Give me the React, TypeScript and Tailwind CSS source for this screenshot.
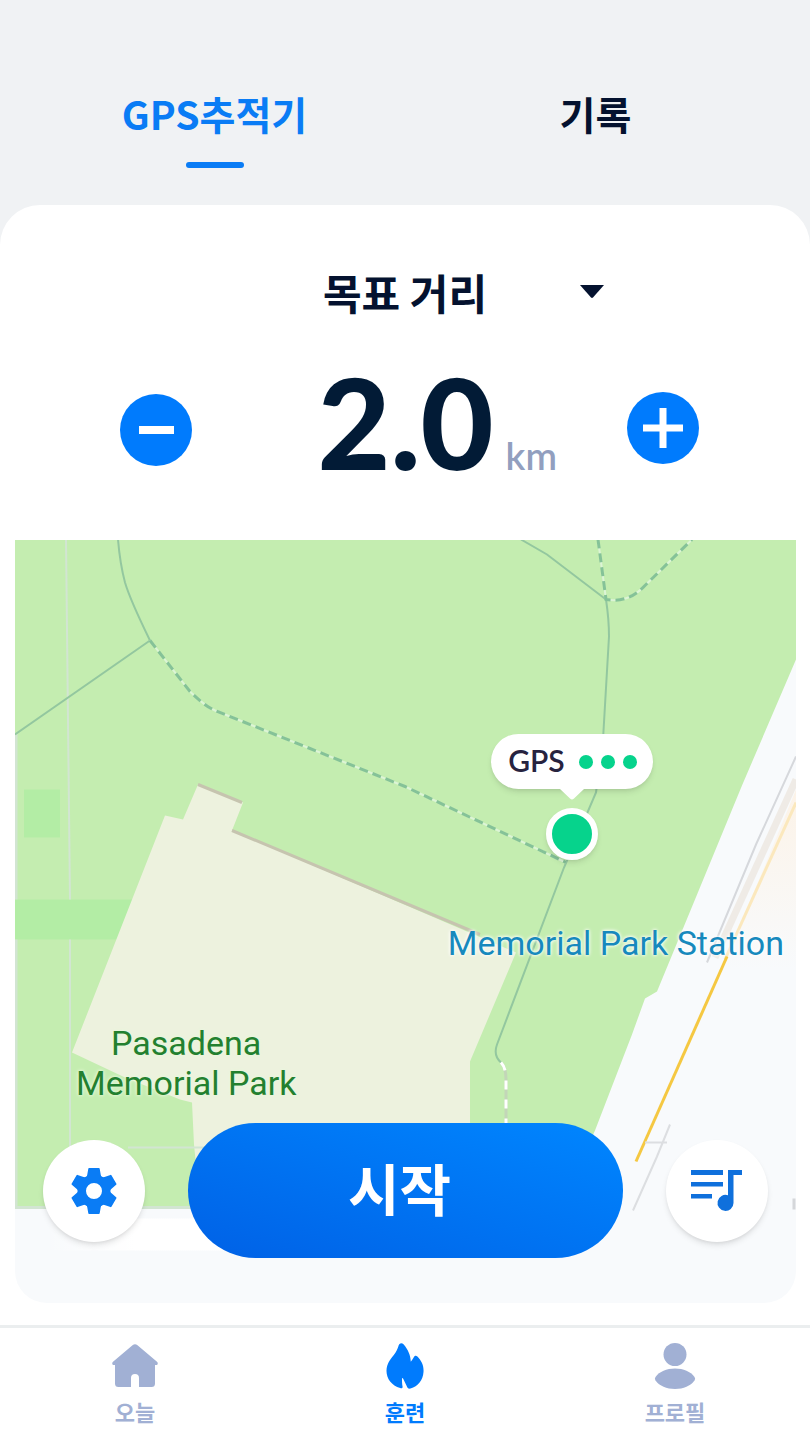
import { useState } from 'react';

const KR = "font-['Noto_Sans_CJK_KR',sans-serif]";
const LATO = "font-['Lato',sans-serif]";

function HomeIcon() {
  return (
    <svg viewBox="0 0 46 44" className="h-11 w-[46px] fill-current" aria-hidden="true">
      <path d="M20.5 1.2a4 4 0 0 1 5 0L45 17.800c1.400 1.300 .8 3.200-1 3.200H43v18.500a3.500 3.500 0 0 1-3.500 3.500H27V34a4 4 0 0 0-8 0v9H6.500A3.500 3.500 0 0 1 3 39.500V21H2c-1.800 0-2.400-1.900-1-3.200z" />
    </svg>
  );
}

function FlameIcon() {
  return (
    <svg viewBox="0 0 38 46" className="h-[46px] w-[38px] fill-current" aria-hidden="true">
      <path d="M13.500 1c1.200-1.200 2.800-1 4 .3 4.800 5.600 7 11 7.300 17.500 1.300-1.500 2-3 3-4.600.8-1.800 2.300-2 3.600-.6C35.500 18 38 22.500 37.500 29c-.5 8-5.500 14.500-13 16.500-2 .5-3-.2-3.700-2.200L17.300 36c-.6-1.400-1.300-1.200-1.300.3 0 2.400.1 4.400.5 7 .4 1.700-.6 2.400-2.300 1.800C5.500 42.300.3 35.500.5 27.500.7 21 4 16.500 7.800 12c2.700-3.300 4-6.500 5-10z" />
    </svg>
  );
}

function ProfileIcon() {
  return (
    <svg viewBox="0 0 42 46" className="h-[46px] w-[42px] fill-current" aria-hidden="true">
      <circle cx="21" cy="11.500" r="11.500" />
      <path d="M21 25.500c8.500 0 15.500 3 19.500 8.500a3 3 0 0 1 0 3.500C36.500 43 29.500 46 21 46S5.500 43 1.500 37.500a3 3 0 0 1 0-3.500C5.500 28.500 12.500 25.500 21 25.500z" />
    </svg>
  );
}

const TEETH = [0, 60, 120, 180, 240, 300];

function GearIcon() {
  return (
    <svg viewBox="-24 -24 48 48" className="size-12 fill-current" aria-hidden="true">
      <circle r="12.250" fill="none" stroke="currentColor" strokeWidth="8.500" />
      {TEETH.map((angle) => (
        <path key={angle} d="M-5 -23H5Q5.500 -23 5.700 -22.300L6.800 -16 8.500 -11H-8.500L-6.800 -16 -5.700 -22.300Q-5.500 -23 -5 -23z" transform={`rotate(${angle})`} />
      ))}
    </svg>
  );
}

function PlaylistIcon() {
  return (
    <svg viewBox="0 0 52 42" className="h-[42px] w-[52px] fill-current" aria-hidden="true">
      <path d="M0 0h32v5H0zM0 12h32v4.500H0zM0 24h21v4.500H0z" />
      <path d="M37 0h14v5h-8.500v28A8 8 0 1 1 37 25.300z" />
    </svg>
  );
}

function MapCanvas() {
  return (
    <svg
      viewBox="15 540 781 764"
      preserveAspectRatio="xMidYMid slice"
      className="absolute inset-0 h-full w-full"
      aria-hidden="true"
    >
      <defs>
        <linearGradient id="blocks" x1="0" y1="0" x2="0" y2="1">
          <stop offset="0" stopColor="#fcf3e8" />
          <stop offset="1" stopColor="#f8fafc" />
        </linearGradient>
        <linearGradient id="strip" x1="0" y1="0" x2="1" y2="0">
          <stop offset="0" stopColor="#fff" stopOpacity="0" />
          <stop offset="0.500" stopColor="#fff" />
        </linearGradient>
      </defs>
      <rect x="15" y="540" width="781" height="764" fill="#f8fafc" />
      <rect x="45" y="1219" width="180" height="32" fill="url(#strip)" />

      {/* park */}
      <path d="M15 540H796V660L742 786 695 900 657 992 645 999 632 1035 595 1131 560 1207H15z" fill="#c4edb0" />
      <path d="M15 900H135V940H15zM24 790H60V838H24z" fill="#b3eda5" />
      <path d="M198 785 243 803 232 831 516 953 470 1062V1207H200L194 1145 192 1103 180 1100 125 1078 72 1053 165 816 183 820z" fill="#edf2de" />
      <path d="M198 785 242 803M232 831 480 935" fill="none" stroke="#c6c4af" strokeWidth="3" />

      {/* minor roads */}
      <g fill="none" stroke="#d2e5d2" strokeWidth="3">
        <path d="M66 540 70 900M70 940V1148M128 1148H205" strokeWidth="2" />
        <path d="M16 734V900M16 940V1207" />
        <path d="M15 1208H205" />
      </g>

      {/* trails */}
      <g fill="none" stroke="#93c79f" strokeWidth="2">
        <path d="M118 540Q120 564 125 583 130 600 150 641L15 735" />
        <path d="M521 540 547 555 606 600Q609 620 609 637L603 740 596 793 564 868 497 1045Q493 1056 501 1063" />
      </g>
      <g fill="none" stroke="#dcf4d6" strokeWidth="2">
        <path d="M150 641 190 692Q204 706 215 711L405 787 566 863" />
        <path d="M598 540 606 600Q628 604 645 586L692 540" />
      </g>
      <g fill="none" stroke="#85c298" strokeWidth="3" strokeDasharray="9 5">
        <path d="M150 641 190 692Q204 706 215 711L405 787 566 863" />
        <path d="M598 540 606 600Q628 604 645 586L692 540" />
      </g>
      <path d="M501 1063Q506 1068 506 1080V1125" fill="none" stroke="#c3d6b8" strokeWidth="3" />
      <path d="M501 1063Q506 1068 506 1080V1125" fill="none" stroke="#fff" strokeWidth="3" strokeDasharray="9 10" />

      {/* streets east of the park */}
      <path d="M796 790V970H722z" fill="url(#blocks)" />
      <path d="M796 780 715 958" fill="none" stroke="#efebe6" strokeWidth="7" />
      <path d="M796 803 725 960" fill="none" stroke="#fbe8bd" strokeWidth="3" />
      <path d="M796 757 756 845 707 963" fill="none" stroke="#d6d8dc" strokeWidth="2" />
      <path d="M727 957 636 1162" fill="none" stroke="#f5c842" strokeWidth="3" />
      <path d="M670 1125 657 1157 633 1211M645 1143H667" fill="none" stroke="#dcdee1" strokeWidth="2" />
      <path d="M794 1199V1210" stroke="#d5d7da" strokeWidth="3" />
    </svg>
  );
}

function GpsMarker() {
  return (
    <div className="absolute left-[61%] top-[194px] flex w-[162px] flex-col items-center">
      <div className="flex h-[55px] w-full items-center justify-center gap-[14px] rounded-full bg-white pb-1 shadow-md">
        <span className={`${LATO} text-[30px] leading-none font-semibold text-[#27233f]`}>GPS</span>
        <span className="flex gap-2 pt-1">
          <i className="size-[14px] rounded-full bg-[#06d38c]" />
          <i className="size-[14px] rounded-full bg-[#06d38c]" />
          <i className="size-[14px] rounded-full bg-[#06d38c]" />
        </span>
      </div>
      <svg viewBox="0 0 24 11" className="h-[11px] w-6 fill-white" aria-hidden="true">
        <path d="M0 0h24L14 9.500q-2 2-4 0z" />
      </svg>
      <div className="mt-2 size-[52px] rounded-full border-[6px] border-white bg-[#06d38c] shadow-md" />
    </div>
  );
}

const TABS = ['GPS추적기', '기록'];

const NAV = [
  { label: '오늘', icon: <HomeIcon /> },
  { label: '훈련', icon: <FlameIcon /> },
  { label: '프로필', icon: <ProfileIcon /> },
];

export default function App() {
  const [tab, setTab] = useState(0);
  const [distance, setDistance] = useState(2);

  return (
    <div className={`${KR} flex min-h-screen flex-col bg-[#f0f2f4] text-[#04122f]`}>
      <header className="grid h-[205px] grid-cols-2 px-6 pt-[82px]">
        {TABS.map((label, i) => (
          <button
            key={label}
            type="button"
            onClick={() => setTab(i)}
            className={`flex flex-col items-center gap-[18px] self-start text-[39px] leading-[62px] font-bold ${
              tab === i ? 'text-[#0a7cf5]' : 'text-[#04122f]'
            }`}
          >
            {label}
            {tab === i && <span className="h-[6px] w-[58px] rounded-full bg-[#0a7cf5]" />}
          </button>
        ))}
      </header>

      <main className="flex flex-1 flex-col rounded-t-[40px] bg-white pt-[54px]">
        <div className="relative mx-auto w-[398px]">
          <select
            aria-label="목표"
            className="h-[64px] w-full appearance-none bg-transparent text-[42px] font-bold [text-align-last:center]"
          >
            <option>목표 거리</option>
            <option>목표 시간</option>
          </select>
          <svg viewBox="0 0 24 13" className="pointer-events-none absolute top-[26px] right-0 h-[13px] w-6 fill-current" aria-hidden="true">
            <path d="M0 0h24L13 12.500q-1 .8-2 0z" />
          </svg>
        </div>

        <div className="mt-[23px] flex h-[152px] items-center pr-[111px] pl-[120px]">
          <button
            type="button"
            aria-label="줄이기"
            onClick={() => setDistance((d) => Math.max(0.5, d - 0.5))}
            className="mt-4 flex size-[72px] items-center justify-center rounded-full bg-[#007bfd]"
          >
            <span className="h-2 w-[35px] bg-white" />
          </button>
          <div className={`${LATO} grid flex-1 grid-cols-[1fr_auto_1fr] items-baseline pr-2`}>
            <span className="col-start-2 text-[126px] leading-[152px] font-black text-[#021b36]">
              {distance.toFixed(1)}
            </span>
            <span className="ml-3 text-[38px] font-semibold text-[#929fbf]">km</span>
          </div>
          <button
            type="button"
            aria-label="늘리기"
            onClick={() => setDistance((d) => d + 0.5)}
            className="mt-3 flex size-[72px] items-center justify-center rounded-full bg-[#007bfd]"
          >
            <svg viewBox="0 0 40 40" className="size-10 fill-white" aria-hidden="true">
              <path d="M16.500 0h7v16.500H40v7H23.500V40h-7V23.500H0v-7h16.500z" />
            </svg>
          </button>
        </div>

        <section className="relative mr-[14px] ml-[15px] mt-[42px] mb-[22px] min-h-[600px] flex-1 overflow-hidden rounded-b-[32px]">
          <MapCanvas />
          <p className="absolute top-[383px] right-3 font-['Roboto',sans-serif] text-[34px] leading-[40px] text-[#1789bd] [text-shadow:0_0_4px_#fff,0_0_3px_#fff]">
            Memorial Park Station
          </p>
          <p className="absolute top-[483px] left-[61px] text-center font-['Roboto',sans-serif] text-[34px] leading-[40px] text-[#23802f] [text-shadow:0_0_4px_#e8f7dc,0_0_3px_#e8f7dc]">
            Pasadena
            <br />
            Memorial Park
          </p>
          <GpsMarker />
          <div className="absolute inset-x-7 bottom-[45px] flex items-center gap-[43px]">
            <button
              type="button"
              aria-label="설정"
              className="flex size-[102px] items-center justify-center rounded-full bg-white text-[#0a7cf5] shadow-md"
            >
              <GearIcon />
            </button>
            <button
              type="button"
              className="h-[135px] flex-1 rounded-full bg-linear-to-tr from-[#0061e6] to-[#0086ff] pr-3 pb-2 text-[56px] leading-none font-bold text-white"
            >
              시작
            </button>
            <button
              type="button"
              aria-label="재생목록"
              className="flex size-[102px] items-center justify-center rounded-full bg-white text-[#0f70dc] shadow-md"
            >
              <PlaylistIcon />
            </button>
          </div>
        </section>
      </main>

      <nav className="grid h-[115px] grid-cols-3 border-t-[3px] border-[#ebeeef] bg-white">
        {NAV.map((item, i) => (
          <a
            key={item.label}
            href="#"
            className={`flex flex-col items-center pt-[14px] text-[22px] leading-8 font-bold ${
              i === 1 ? 'text-[#007bfd]' : 'text-[#a1b0d4]'
            }`}
          >
            <span className="flex h-[48px] items-center">{item.icon}</span>
            <span className="mt-[5px]">{item.label}</span>
          </a>
        ))}
      </nav>
    </div>
  );
}
